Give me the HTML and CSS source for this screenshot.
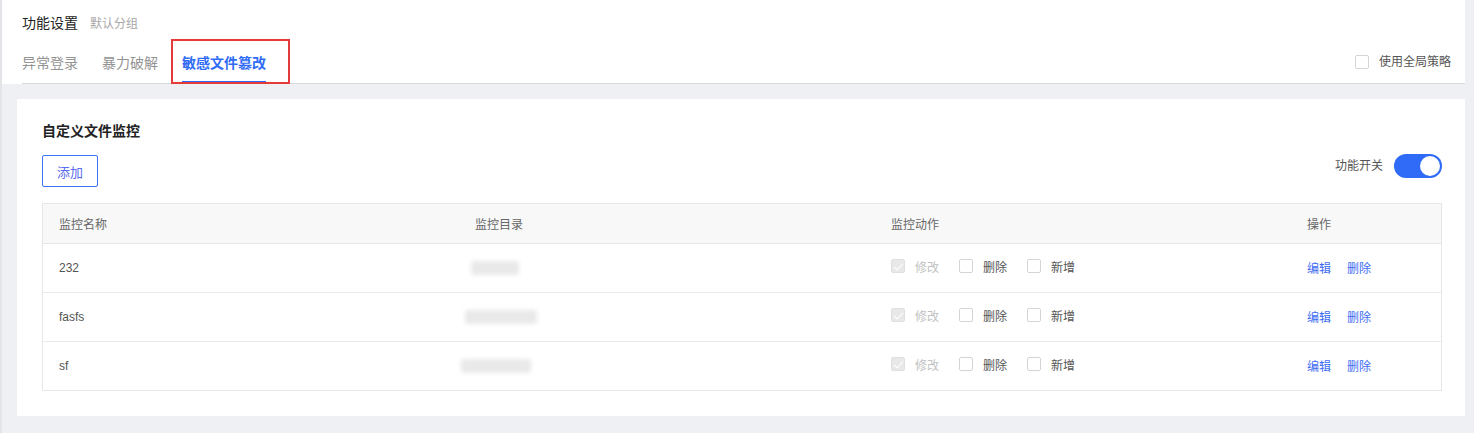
FILE: index.html
```html
<!DOCTYPE html>
<html lang="zh-CN">
<head>
<meta charset="utf-8">
<title>功能设置</title>
<link rel="stylesheet" href="styles.css">
</head>
<body>
<div class="app">
  <header class="header">
    <div class="crumb"><span class="crumb-title">功能设置</span><span class="crumb-sub">默认分组</span></div>
    <div class="tabs">
      <div class="tab-list">
        <span class="tab">异常登录</span>
        <span class="tab">暴力破解</span>
        <span class="tab active">敏感文件篡改<span class="mark"></span></span>
      </div>
      <label class="global"><span class="cb"></span><span>使用全局策略</span></label>
    </div>
  </header>
  <main class="main">
    <section class="card">
      <h2 class="card-title">自定义文件监控</h2>
      <div class="toolbar">
        <button class="btn">添加</button>
        <div class="switch-wrap"><span class="switch-label">功能开关</span><span class="switch"><span class="knob"></span></span></div>
      </div>
      <div class="table">
        <div class="row head">
          <div class="cell c1">监控名称</div>
          <div class="cell c2">监控目录</div>
          <div class="cell c3">监控动作</div>
          <div class="cell c4">操作</div>
        </div>
        <div class="row">
          <div class="cell c1">232</div>
          <div class="cell c2"><span class="blur b1"></span></div>
          <div class="cell c3 actions">
            <span class="opt disabled"><span class="cb checked"></span>修改</span>
            <span class="opt"><span class="cb"></span>删除</span>
            <span class="opt"><span class="cb"></span>新增</span>
          </div>
          <div class="cell c4 ops"><a>编辑</a><a>删除</a></div>
        </div>
        <div class="row">
          <div class="cell c1">fasfs</div>
          <div class="cell c2"><span class="blur b2"></span></div>
          <div class="cell c3 actions">
            <span class="opt disabled"><span class="cb checked"></span>修改</span>
            <span class="opt"><span class="cb"></span>删除</span>
            <span class="opt"><span class="cb"></span>新增</span>
          </div>
          <div class="cell c4 ops"><a>编辑</a><a>删除</a></div>
        </div>
        <div class="row last">
          <div class="cell c1">sf</div>
          <div class="cell c2"><span class="blur b3"></span></div>
          <div class="cell c3 actions">
            <span class="opt disabled"><span class="cb checked"></span>修改</span>
            <span class="opt"><span class="cb"></span>删除</span>
            <span class="opt"><span class="cb"></span>新增</span>
          </div>
          <div class="cell c4 ops"><a>编辑</a><a>删除</a></div>
        </div>
      </div>
    </section>
  </main>
</div>
</body>
</html>
```
FILE: styles.css
```css
* { box-sizing: border-box; }
html, body { margin: 0; padding: 0; }
body {
  background: #eff0f4;
  font-family: "Liberation Sans", "Noto Sans CJK SC", sans-serif;
  color: #555;
  height: 433px;
  overflow: hidden;
}
.app {
  margin-right: 9px;
  border-left: 2px solid #e3e4e8;
  min-height: 433px;
}
.header {
  background: #fff;
  padding: 12px 0 0 20px;
}
.crumb { display: flex; align-items: center; height: 20px; }
.crumb-title { font-size: 14px; color: #222; }
.crumb-sub { font-size: 12px; color: #a8a8a8; margin-left: 12px; }
.tabs {
  display: flex;
  justify-content: space-between;
  align-items: flex-end;
  margin-top: 20px;
  border-bottom: 1px solid #d9dadd;
  padding-right: 14px;
}
.tab-list { display: flex; }
.tab {
  position: relative;
  font-size: 14px;
  line-height: 22px;
  color: #949494;
  margin-right: 24px;
  padding-bottom: 7px;
  border-bottom: 2px solid transparent;
}
.tab.active {
  color: #2f6bf5;
  font-weight: 700;
  border-bottom-color: #2f6bf5;
}
.mark {
  position: absolute;
  left: -11px;
  right: -24px;
  top: -13px;
  bottom: -3px;
  border: 2px solid #e53a3a;
}
.global {
  display: flex;
  align-items: center;
  font-size: 12px;
  color: #555;
  margin-bottom: 13px;
  line-height: 16px;
}
.cb {
  display: inline-block;
  width: 14px;
  height: 14px;
  border: 1px solid #d5d5d5;
  border-radius: 2px;
  background: #fff;
  margin-right: 10px;
  flex: none;
  position: relative;
}
.cb.checked {
  background: #e8e8e8;
  border-color: #e0e0e0;
}
.cb.checked::after {
  content: "";
  position: absolute;
  left: 4px;
  top: 1px;
  width: 4px;
  height: 8px;
  border-right: 1.5px solid #fff;
  border-bottom: 1.5px solid #fff;
  transform: rotate(45deg);
}
.main { padding: 15px 0 18px 15px; }
.card {
  background: #fff;
  padding: 22px 23px 25px 25px;
}
.card-title {
  margin: 0;
  font-size: 14px;
  line-height: 20px;
  font-weight: 700;
  color: #222;
}
.toolbar {
  display: flex;
  justify-content: space-between;
  align-items: flex-start;
  margin-top: 14px;
}
.btn {
  width: 56px;
  height: 32px;
  border: 1px solid #3b73f6;
  border-radius: 2px;
  background: #fff;
  color: #5a6cf0;
  font-family: inherit;
  font-size: 13px;
  padding: 0;
}
.switch-wrap {
  display: flex;
  align-items: center;
  margin-top: -1px;
}
.switch-label { font-size: 12px; color: #555; margin-right: 11px; margin-top: -3px; }
.switch {
  width: 48px;
  height: 24px;
  border-radius: 12px;
  background: #2f6bf6;
  display: flex;
  justify-content: flex-end;
  align-items: center;
  padding: 2px;
}
.knob { width: 20px; height: 20px; border-radius: 50%; background: #fff; }
.table {
  margin-top: 16px;
  border: 1px solid #e6e6e6;
}
.row {
  display: flex;
  height: 49px;
  border-bottom: 1px solid #ebebeb;
  font-size: 12px;
}
.row.last { border-bottom: none; height: 48px; }
.row.head {
  background: #f8f8f8;
  height: 40px;
  color: #666;
  border-bottom-color: #e6e6e6;
}
.cell {
  display: flex;
  align-items: center;
  padding-left: 16px;
  padding-bottom: 1px;
}
.row.head .cell { padding-bottom: 0; }
.c1, .c2, .c3 { width: 416px; }
.c4 { flex: 1; }
.blur {
  display: inline-block;
  height: 14px;
  background: #e9e9e9;
  filter: blur(2px);
  border-radius: 3px;
}
.b1 { width: 48px; margin-left: -4px; }
.b2 { width: 72px; margin-left: -10px; }
.b3 { width: 70px; margin-left: -14px; }
.actions { padding-bottom: 4px; }
.actions .opt {
  display: flex;
  align-items: center;
  margin-right: 20px;
  color: #555;
}
.actions .opt.disabled { color: #c2c2c2; }
.ops a {
  color: #3d6cf5;
  margin-right: 16px;
  cursor: pointer;
}
```
